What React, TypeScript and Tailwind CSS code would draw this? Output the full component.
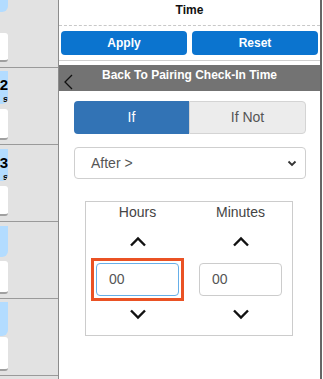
import React from "react";

const Up = () => (
  <svg width="18" height="11" viewBox="0 0 18 11" fill="none">
    <path d="M2 9.5 L9 2.5 L16 9.5" stroke="#111" strokeWidth="2.4" />
  </svg>
);
const Down = () => (
  <svg width="18" height="11" viewBox="0 0 18 11" fill="none">
    <path d="M2 1.5 L9 8.5 L16 1.5" stroke="#111" strokeWidth="2.4" />
  </svg>
);

const rows = [
  { num: "", sub: "", pt: "pt-0", blueH: "h-[12px]", gap: "mt-[21px]", whiteH: "h-[29px]", h: "h-[68px]" },
  { num: "2", sub: "s", pt: "pt-[3px]", blueH: "h-[33px]", gap: "mt-[5px]", whiteH: "h-[31px]", h: "h-[77px]" },
  { num: "3", sub: "s", pt: "pt-[4px]", blueH: "h-[32px]", gap: "mt-[5px]", whiteH: "h-[30px]", h: "h-[77px]" },
  { num: "", sub: "", pt: "pt-[4px]", blueH: "h-[31px]", gap: "mt-[4px]", whiteH: "h-[33px]", h: "h-[77px]" },
  { num: "", sub: "", pt: "pt-[3px]", blueH: "h-[34px]", gap: "mt-[1px]", whiteH: "h-[34px]", h: "h-[77px]" },
];

export default function App() {
  return (
    <div
      className="flex w-[323px] h-[379px] overflow-hidden bg-white"
      style={{ fontFamily: '"Liberation Sans", Arial, sans-serif' }}
    >
      {/* left strip */}
      <div className="w-[58px] shrink-0 bg-[#e2e2e2] flex flex-col overflow-hidden">
        {rows.map((r, i) => (
          <div key={i} className={`${r.h} shrink-0 border-b border-[#9a9a9a] flex flex-col ${r.pt}`}>
            <div className={`w-[8px] ${r.blueH} bg-[#b3dcff] rounded-br-[6px] overflow-hidden flex`}>
              <div className="w-[20px] -ml-[12px] shrink-0 flex flex-col items-end pt-[6px] leading-none text-black font-bold">
                <span className="text-[15px]">{r.num}</span>
                <span className="text-[9px] mt-[3px]">{r.sub}</span>
              </div>
            </div>
            <div className={`${r.gap} w-[8px] ${r.whiteH} bg-white rounded-r-[3px] border-b-2 border-[#a0a0a0]`} />
          </div>
        ))}
      </div>
      <div className="w-[1px] shrink-0 bg-[#8c8c8c]" />
      {/* right panel */}
      <div className="w-[261px] shrink-0 flex flex-col bg-white">
        <div className="h-[26px] border-b border-dashed border-[#c8c8c8] flex justify-center pt-[1px]">
          <span className="text-[12px] font-bold text-[#111]">Time</span>
        </div>
        <div className="flex gap-[5px] px-[2px] pt-[5px] pb-[5px] border-b border-[#cfcfcf]">
          <button className="flex-1 h-[24px] rounded-[4px] bg-[#0b74cf] text-white text-[12px] font-bold">Apply</button>
          <button className="flex-1 h-[24px] rounded-[4px] bg-[#0b74cf] text-white text-[12px] font-bold">Reset</button>
        </div>
        <div className="relative mt-[4px] h-[26px] bg-[#737373] flex justify-center pt-[1px]">
          <span className="text-[12px] font-bold text-white">Back To Pairing Check-In Time</span>
          <svg className="absolute left-[4px] top-[9px]" width="11" height="16" viewBox="0 0 11 16" fill="none">
            <path d="M9 1 L2 8 L9 15" stroke="#111" strokeWidth="1.3" />
          </svg>
        </div>
        <div className="mt-[10px] ml-[15px] mr-[14px] flex h-[33px] text-[14px]">
          <div className="flex-1 bg-[#3273b5] text-white rounded-l-[4px] flex items-center justify-center">If</div>
          <div className="flex-1 bg-[#ececec] text-[#555] border border-[#d4d4d4] rounded-r-[4px] flex items-center justify-center">If Not</div>
        </div>
        <div className="mt-[13px] ml-[15px] mr-[14px] h-[32px] border border-[#cfcfcf] rounded-[4px] flex items-center pl-[16px] pr-[8px] text-[14px] text-[#555]">
          <span className="flex-1">After &gt;</span>
          <svg width="10" height="7" viewBox="0 0 10 7" fill="none">
            <path d="M1.5 1.5 L5 5 L8.5 1.5" stroke="#333" strokeWidth="1.8" />
          </svg>
        </div>
        <div className="mt-[22px] ml-[26px] w-[208px] h-[135px] border border-[#cccccc] flex">
          {["Hours", "Minutes"].map((lab, i) => (
            <div key={lab} className="flex-1 flex flex-col items-center pt-[2px]">
              <span className="text-[14px] text-[#444] leading-[16px]">{lab}</span>
              <div className="mt-[16px] flex"><Up /></div>
              <div
                className={`mt-[11px] border-[3px] p-[2px] ${
                  i === 0 ? "border-[#ea5224]" : "border-transparent"
                }`}
              >
                <div
                  className={`h-[33px] w-[83px] rounded-[4px] border flex items-center pl-[12px] text-[14px] text-[#555] ${
                    i === 0 ? "border-[#66afe9]" : "border-[#cccccc]"
                  }`}
                >
                  00
                </div>
              </div>
              <div className="mt-[8px] flex"><Down /></div>
            </div>
          ))}
        </div>
      </div>
      <div className="w-[2px] shrink-0 bg-[#666666]" />
      <div className="w-[1px] shrink-0 bg-white" />
    </div>
  );
}
